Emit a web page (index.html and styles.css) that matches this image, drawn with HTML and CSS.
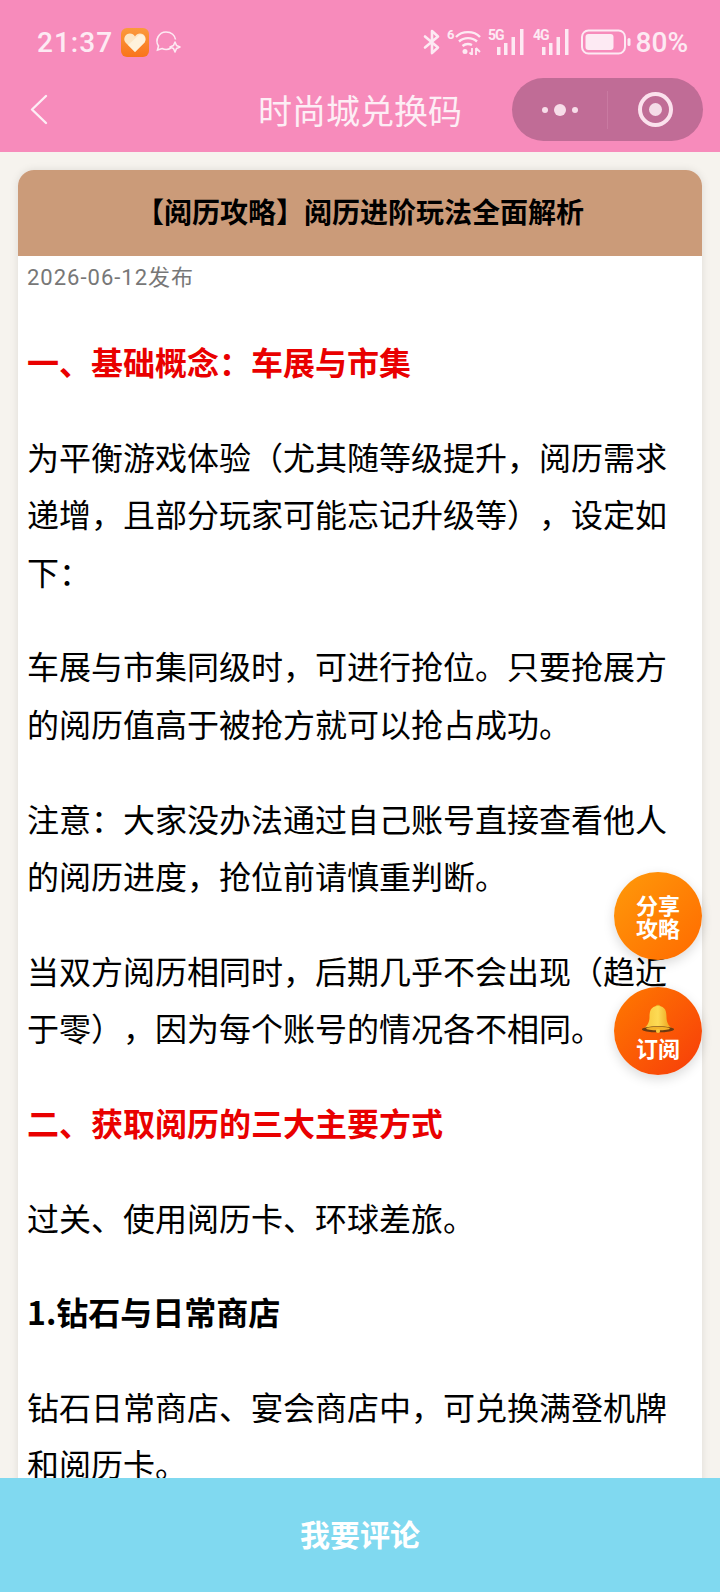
FILE: index.html
```html
<!DOCTYPE html>
<html lang="zh-CN">
<head>
  <meta charset="UTF-8">
  <meta name="viewport" content="width=device-width, initial-scale=1.0">
  <title>时尚城兑换码</title>
  <link rel="stylesheet" href="styles.css">
</head>
<body>
  <header class="top">
    <div class="status">
      <div class="status-left">
        <span class="time">21:37</span>
        <svg class="app-icon" width="28" height="29" viewBox="0 0 28 29">
          <defs>
            <linearGradient id="appBg" x1="0" y1="0" x2="0" y2="1">
              <stop offset="0" stop-color="#fb9a3c"/>
              <stop offset="1" stop-color="#f9741c"/>
            </linearGradient>
          </defs>
          <rect width="28" height="29" rx="6" fill="url(#appBg)"/>
          <path d="M14 24 L4.500 14.500 C1.500 10.500 4.500 5.500 9 5.500 C11 5.500 13 6.500 14 8.500 C15 6.500 17 5.500 19 5.500 C23.500 5.500 26.500 10.500 23.500 14.500 Z" fill="#fde6c4"/>
          <path d="M14 24 L7 17 L18 7 C21 5 26 9 23.500 14.500 Z" fill="#fff6e6" opacity="0.7"/>
        </svg>
        <svg class="chat-icon" width="28" height="26" viewBox="0 0 28 26" fill="none" stroke="#fdeaf3" stroke-width="1.600">
          <path d="M17 19 C14 21 10 20.500 8 19.500 L3.500 21 L4.500 17 C0.500 11 5 3 12 3 C17.500 3 21 6.500 21.500 10.500"/>
          <path d="M21 13 L22.500 16.500 L26 18 L22.500 19.500 L21 23 L19.500 19.500 L16 18 L19.500 16.500 Z" stroke-linejoin="round"/>
        </svg>
      </div>
      <div class="status-right">
        <svg class="bt" width="17" height="26" viewBox="0 0 17 26" fill="none" stroke="#fdeaf3" stroke-width="2.600" stroke-linecap="round" stroke-linejoin="round">
          <path d="M2 7.500 L15 18.500 L9 24 L9 2 L15 7.500 L2 18.500"/>
        </svg>
        <svg class="wifi" width="34" height="26" viewBox="0 0 34 26" fill="none" stroke="#fdeaf3" stroke-width="2.400">
          <text x="0" y="10" class="mini mini-six">6</text>
          <path d="M9 8 C15 1.500 27 1.500 33 8"/>
          <path d="M12 12.500 C17 8 25 8 30 12.500"/>
          <path d="M15.500 17 C18.500 14.500 22 14.500 25 16"/>
          <circle cx="18" cy="22.500" r="2.500" fill="#fdeaf3" stroke="none"/>
          <path d="M25 19 L25 26 L22.500 23.500 M29 19 L29 26 M29 19 L33 23" stroke-width="1.800"/>
        </svg>
        <svg class="signal" width="38" height="26" viewBox="0 0 38 26" fill="#fdeaf3">
          <text x="0" y="11" class="mini">5G</text>
          <rect x="9" y="18" width="3.500" height="8"/>
          <rect x="16" y="14" width="3.500" height="12"/>
          <rect x="23.500" y="8" width="3.500" height="18"/>
          <rect x="32" y="0" width="3.500" height="26"/>
        </svg>
        <svg class="signal" width="38" height="26" viewBox="0 0 38 26" fill="#fdeaf3">
          <text x="0" y="11" class="mini">4G</text>
          <rect x="9" y="18" width="3.500" height="8"/>
          <rect x="16" y="14" width="3.500" height="12"/>
          <rect x="23.500" y="8" width="3.500" height="18"/>
          <rect x="32" y="0" width="3.500" height="26"/>
        </svg>
        <svg class="battery" width="50" height="26" viewBox="0 0 50 26">
          <rect x="1" y="1.500" width="43" height="23" rx="6.500" fill="none" stroke="#fdeaf3" stroke-width="2"/>
          <rect x="4.500" y="5" width="28" height="16" rx="3" fill="#fdeaf3"/>
          <rect x="46.500" y="9" width="3" height="8" rx="1.500" fill="#fdeaf3"/>
        </svg>
        <span class="percent">80%</span>
      </div>
    </div>
    <nav class="nav">
      <div class="nav-left">
        <svg width="18" height="31" viewBox="0 0 18 31" fill="none" stroke="#fdeef5" stroke-width="2.400" stroke-linecap="round" stroke-linejoin="round">
          <path d="M16 2 L2 15.500 L16 29"/>
        </svg>
      </div>
      <div class="nav-title">时尚城兑换码</div>
      <div class="nav-right">
        <div class="capsule">
          <div class="capsule-part">
            <i class="dot"></i><i class="dot dot-big"></i><i class="dot"></i>
          </div>
          <div class="capsule-line"></div>
          <div class="capsule-part">
            <i class="target"></i>
          </div>
        </div>
      </div>
    </nav>
  </header>

  <main class="page">
    <article class="card">
      <h1 class="card-title">【阅历攻略】阅历进阶玩法全面解析</h1>
      <div class="date">2026-06-12发布</div>
      <div class="content">
        <h2 class="red">一、基础概念：车展与市集</h2>
        <p>为平衡游戏体验（尤其随等级提升，阅历需求递增，且部分玩家可能忘记升级等），设定如下：</p>
        <p>车展与市集同级时，可进行抢位。只要抢展方的阅历值高于被抢方就可以抢占成功。</p>
        <p>注意：大家没办法通过自己账号直接查看他人的阅历进度，抢位前请慎重判断。</p>
        <p>当双方阅历相同时，后期几乎不会出现（趋近于零），因为每个账号的情况各不相同。</p>
        <h2 class="red">二、获取阅历的三大主要方式</h2>
        <p>过关、使用阅历卡、环球差旅。</p>
        <h2>1.钻石与日常商店</h2>
        <p>钻石日常商店、宴会商店中，可兑换满登机牌和阅历卡。</p>
      </div>
    </article>
  </main>

  <div class="float float-share"><span>分享</span><span>攻略</span></div>
  <div class="float float-sub">
    <svg width="34" height="33" viewBox="0 0 40 36">
      <defs>
        <linearGradient id="bell" x1="0" y1="0" x2="1" y2="0">
          <stop offset="0" stop-color="#f7c63a"/>
          <stop offset="0.5" stop-color="#fddb55"/>
          <stop offset="1" stop-color="#ea9a12"/>
        </linearGradient>
      </defs>
      <circle cx="20" cy="3.500" r="3" fill="#eeb026"/>
      <path d="M20 2 C11 2 10 9 10 15 C10 21 8 25 3 29 L37 29 C32 25 30 21 30 15 C30 9 29 2 20 2 Z" fill="url(#bell)"/>
      <ellipse cx="20" cy="29.500" rx="19" ry="3.500" fill="#6b3a12"/>
      <ellipse cx="20" cy="28.500" rx="14" ry="2" fill="#f2b32a"/>
      <circle cx="20" cy="31.500" r="2.500" fill="#f7c63a"/>
    </svg>
    <span>订阅</span>
  </div>

  <footer class="bottom">我要评论</footer>
</body>
</html>
```

FILE: styles.css
```css
html, body {
  margin: 0;
  padding: 0;
}

body {
  width: 720px;
  height: 1592px;
  overflow: hidden;
  position: relative;
  background-color: #f6f3ee;
  color: #000;
  font-family: "Noto Sans CJK SC", "Noto Sans", sans-serif;
  text-spacing-trim: space-all;
}

/* Top bar */
.top {
  background-color: #f78bbb;
  height: 152px;
}

.status {
  height: 78px;
  display: flex;
  justify-content: space-between;
  align-items: center;
  padding: 6px 32px 0 37px;
  box-sizing: border-box;
  color: #fdeaf3;
}

.status-left, .status-right {
  display: flex;
  align-items: center;
}

.time {
  font-family: Roboto, sans-serif;
  font-size: 28px;
  font-weight: 500;
  letter-spacing: 1px;
  margin-right: 8px;
}

.chat-icon {
  margin-left: 5px;
}

.bt {
  margin-right: 7px;
}

.wifi {
  margin-right: 7px;
}

.signal {
  margin-right: 7px;
}

.signal + .battery {
  margin-left: 3px;
}

.mini {
  font-family: "Roboto", sans-serif;
  font-size: 14px;
  font-weight: 700;
  letter-spacing: -1px;
  fill: #fdeaf3;
  stroke: none;
}

.mini-six {
  font-size: 13px;
}

.percent {
  font-family: Roboto, sans-serif;
  font-size: 28px;
  font-weight: 500;
  margin-left: 5px;
}

.nav {
  height: 61px;
  display: grid;
  grid-template-columns: 1fr auto 1fr;
  align-items: center;
}

.nav-left {
  display: flex;
  align-items: center;
  padding-left: 30px;
}

.nav-title {
  font-size: 34px;
  color: #fdeef5;
  line-height: 1;
}

.nav-right {
  display: flex;
  justify-content: flex-end;
  padding-right: 17px;
}

.capsule {
  width: 191px;
  height: 63px;
  border-radius: 32px;
  background-color: #c06c96;
  display: flex;
  align-items: center;
}

.capsule-part {
  flex: 1;
  display: flex;
  justify-content: center;
  align-items: center;
  gap: 6px;
}

.capsule-line {
  width: 1px;
  height: 38px;
  background-color: #c97aa1;
}

.dot {
  width: 6px;
  height: 6px;
  border-radius: 50%;
  background-color: #f7dde9;
}

.dot-big {
  width: 12px;
  height: 12px;
}

.target {
  width: 13px;
  height: 13px;
  border-radius: 50%;
  background-color: #f4dbe7;
  border: 7px solid #c06c96;
  box-shadow: 0 0 0 4px #fbe1ed;
}

/* Article */
.page {
  padding: 18px 18px 0;
}

.card {
  background-color: #fff;
  border-radius: 16px 16px 0 0;
  box-shadow: 0 0 8px rgba(0, 0, 0, 0.1);
  overflow: hidden;
}

.card-title {
  margin: 0;
  height: 86px;
  line-height: 82px;
  background-color: #cb9b79;
  text-align: center;
  font-size: 28px;
  font-weight: 700;
}

.date {
  padding: 4px 9px 0;
  font-family: Roboto, "Noto Sans CJK SC", sans-serif;
  font-size: 22px;
  letter-spacing: 1px;
  line-height: 36px;
  color: #777;
}

.content {
  padding: 0 9px;
  font-size: 32px;
  line-height: 57.6px;
}

.content p {
  margin: 37px 0;
}

.content h2 {
  margin: 37px 0;
  font-size: 32px;
  font-weight: 700;
  line-height: 57.6px;
}

.red {
  color: #e90000;
}

/* Floating buttons */
.float {
  position: absolute;
  right: 18px;
  width: 88px;
  height: 88px;
  border-radius: 50%;
  color: #fff;
  font-size: 22px;
  font-weight: 700;
  line-height: 23px;
  display: flex;
  flex-direction: column;
  align-items: center;
  justify-content: center;
  box-shadow: 0 4px 12px rgba(0, 0, 0, 0.15);
}

.float-share {
  top: 872px;
  background: linear-gradient(135deg, #ff9a0a, #ff6a00);
}

.float-sub {
  top: 987px;
  background: linear-gradient(135deg, #ff7a00, #f73c0a);
}

.float-sub svg {
  margin-top: 0;
}

/* Bottom button */
.bottom {
  position: absolute;
  left: 0;
  right: 0;
  bottom: 0;
  height: 114px;
  padding-bottom: 5px;
  box-sizing: border-box;
  background-color: #80d9f0;
  color: #fff;
  font-size: 30px;
  font-weight: 700;
  display: flex;
  align-items: center;
  justify-content: center;
}
```
